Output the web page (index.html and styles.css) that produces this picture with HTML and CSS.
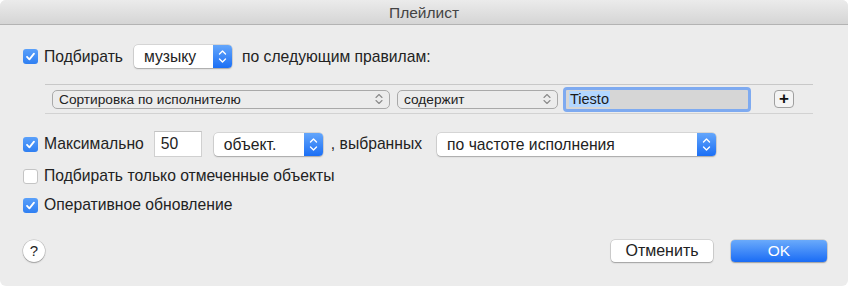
FILE: index.html
```html
<!DOCTYPE html>
<html lang="ru">
<head>
    <meta charset="UTF-8">
    <title>Плейлист</title>
    <link rel="stylesheet" href="styles.css">
</head>
<body>
<div class="window">
    <div class="titlebar">Плейлист</div>

    <div class="content">
        <div class="row row-match">
            <span class="check on"><svg viewBox="0 0 15 15"><path d="M4 7.8 L6.4 10.4 L11 4.6"/></svg></span>
            <span class="label">Подбирать</span>
            <div class="popup popup-music">
                <span class="popup-text">музыку</span>
                <span class="stepper"><svg viewBox="0 0 19 23"><path d="M6.5 9 L9.5 6 L12.5 9 M6.5 14 L9.5 17 L12.5 14"/></svg></span>
            </div>
            <span class="label">по следующим правилам:</span>
        </div>

        <div class="rules">
            <div class="mini-popup mini-field">
                <span>Сортировка по исполнителю</span>
                <svg viewBox="0 0 10 14"><path d="M2 5.5 L5 2.5 L8 5.5 M2 8.5 L5 11.5 L8 8.5"/></svg>
            </div>
            <div class="mini-popup mini-op">
                <span>содержит</span>
                <svg viewBox="0 0 10 14"><path d="M2 5.5 L5 2.5 L8 5.5 M2 8.5 L5 11.5 L8 8.5"/></svg>
            </div>
            <div class="value-field"><span class="selected">Tiesto</span></div>
            <div class="plus-btn">+</div>
        </div>

        <div class="row row-limit">
            <span class="check on"><svg viewBox="0 0 15 15"><path d="M4 7.8 L6.4 10.4 L11 4.6"/></svg></span>
            <span class="label">Максимально</span>
            <div class="num-field">50</div>
            <div class="popup popup-unit">
                <span class="popup-text">объект.</span>
                <span class="stepper"><svg viewBox="0 0 19 23"><path d="M6.5 9 L9.5 6 L12.5 9 M6.5 14 L9.5 17 L12.5 14"/></svg></span>
            </div>
            <span class="label label-chosen">, выбранных</span>
            <div class="popup popup-order">
                <span class="popup-text">по частоте исполнения</span>
                <span class="stepper"><svg viewBox="0 0 19 23"><path d="M6.5 9 L9.5 6 L12.5 9 M6.5 14 L9.5 17 L12.5 14"/></svg></span>
            </div>
        </div>

        <div class="row row-option">
            <span class="check"></span>
            <span class="label">Подбирать только отмеченные объекты</span>
        </div>

        <div class="row row-option row-live">
            <span class="check on"><svg viewBox="0 0 15 15"><path d="M4 7.8 L6.4 10.4 L11 4.6"/></svg></span>
            <span class="label">Оперативное обновление</span>
        </div>

        <div class="footer">
            <div class="help-btn">?</div>
            <div class="buttons">
                <div class="btn">Отменить</div>
                <div class="btn btn-ok">OK</div>
            </div>
        </div>
    </div>
</div>
</body>
</html>
```

FILE: styles.css
```css
body {
    margin: 0;
    background: #fff;
    font-family: 'Liberation Sans', Arial, sans-serif;
    color: #222;
}

.window {
    width: 848px;
    height: 286px;
    background: #ececec;
    border-radius: 6px;
    overflow: hidden;
    box-sizing: border-box;
}

.titlebar {
    height: 24px;
    line-height: 25px;
    text-align: center;
    font-size: 15.5px;
    color: #444;
    background: linear-gradient(#ebebeb, #d5d5d5);
    border-bottom: 1px solid #b3b3b3;
}

.content {
    padding: 0 21px 0 23px;
}

.row {
    display: flex;
    align-items: center;
}

.label {
    font-size: 15.7px;
    white-space: nowrap;
}

/* Casillas */
.check {
    width: 15px;
    height: 15px;
    box-sizing: border-box;
    border-radius: 3px;
    background: #fff;
    border: 1px solid #c4c4c4;
    margin-right: 6px;
    flex-shrink: 0;
}

    .check.on {
        background: linear-gradient(#5aa0fa, #2f7ff2);
        border: none;
    }

    .check svg {
        display: block;
        width: 15px;
        height: 15px;
    }

        .check svg path {
            fill: none;
            stroke: #fff;
            stroke-width: 1.8;
            stroke-linecap: round;
            stroke-linejoin: round;
        }

.row-match {
    margin-top: 20px;
    height: 23px;
}

/* Menús desplegables */
.popup {
    display: flex;
    align-items: stretch;
    height: 23px;
    box-sizing: border-box;
    background: #fff;
    border-radius: 4px;
    box-shadow: 0 0 0 0.5px rgba(0, 0, 0, 0.18), 0 1px 1.5px rgba(0, 0, 0, 0.22);
    overflow: hidden;
}

.popup-text {
    flex: 1;
    font-size: 15.7px;
    line-height: 23px;
    padding-left: 10px;
    white-space: nowrap;
}

.stepper {
    width: 19px;
    background: linear-gradient(#64a6fb, #1b6ff5);
}

    .stepper svg {
        display: block;
        width: 19px;
        height: 23px;
    }

        .stepper svg path {
            fill: none;
            stroke: #fff;
            stroke-width: 1.4;
            stroke-linecap: round;
            stroke-linejoin: round;
        }

.popup-music {
    width: 98px;
    margin: 0 10px 0 11px;
}

/* Fila de reglas */
.rules {
    display: flex;
    align-items: center;
    margin: 16px 0 0 22px;
    width: 761px;
    height: 28px;
    border-top: 1px solid #c8c8c8;
    border-bottom: 1px solid #d2d2d2;
    padding-left: 7px;
    box-sizing: content-box;
}

.mini-popup {
    display: flex;
    align-items: center;
    height: 19px;
    box-sizing: border-box;
    border: 1px solid #a9a9a9;
    border-radius: 5px;
    background: #ececec;
    font-size: 13.7px;
    padding: 0 5px 0 6px;
}

    .mini-popup span {
        flex: 1;
        white-space: nowrap;
    }

    .mini-popup svg {
        width: 10px;
        height: 14px;
    }

        .mini-popup svg path {
            fill: none;
            stroke: #8a8a8a;
            stroke-width: 1.1;
            stroke-linecap: round;
            stroke-linejoin: round;
        }

.mini-field {
    width: 338px;
}

.mini-op {
    width: 161px;
    margin-left: 7px;
}

.value-field {
    width: 188px;
    height: 25px;
    box-sizing: border-box;
    margin-left: 5px;
    border: 3px solid #7eaaf0;
    border-radius: 4px;
    background: #d6d6d6;
    font-size: 14.5px;
    line-height: 19px;
    padding-left: 3px;
}

    .value-field .selected {
        background: #b3d7ff;
        color: #1a1a1a;
        padding: 0 1px;
    }

.plus-btn {
    width: 20px;
    height: 18px;
    box-sizing: border-box;
    margin-left: 23px;
    border: 1px solid #9f9f9f;
    border-radius: 4px;
    background: #f4f4f4;
    text-align: center;
    font-size: 17px;
    font-weight: bold;
    line-height: 15px;
    color: #111;
}

/* Límite */
.row-limit {
    margin-top: 17px;
    height: 26px;
}

.num-field {
    width: 48px;
    height: 26px;
    box-sizing: border-box;
    margin-left: 10px;
    background: #fff;
    border: 1px solid #d0d0d0;
    border-top-color: #c2c2c2;
    font-size: 15.7px;
    line-height: 24px;
    padding-left: 6px;
}

.popup-unit {
    width: 109px;
    margin: 0 8px 0 12px;
}

.label-chosen {
    margin-right: 15px;
}

.popup-order {
    width: 279px;
}

.row-option {
    margin-top: 9px;
    height: 20px;
}

.row-live {
    margin-top: 9px;
}

/* Pie */
.footer {
    display: flex;
    justify-content: space-between;
    align-items: center;
    margin-top: 25px;
    height: 22px;
}

.help-btn {
    width: 22px;
    height: 22px;
    border-radius: 50%;
    background: #fff;
    box-shadow: 0 0 0 0.5px rgba(0, 0, 0, 0.2), 0 1px 1.5px rgba(0, 0, 0, 0.25);
    text-align: center;
    font-size: 15px;
    line-height: 22px;
    color: #222;
}

.buttons {
    display: flex;
    gap: 18px;
}

.btn {
    width: 102px;
    height: 22px;
    border-radius: 4px;
    background: #fff;
    box-shadow: 0 0 0 0.5px rgba(0, 0, 0, 0.2), 0 1px 1.5px rgba(0, 0, 0, 0.25);
    text-align: center;
    font-size: 16px;
    line-height: 22px;
}

.btn-ok {
    width: 96px;
    background: linear-gradient(#6aaafb, #1a6cf5);
    color: #fff;
    font-size: 15.5px;
}
```
